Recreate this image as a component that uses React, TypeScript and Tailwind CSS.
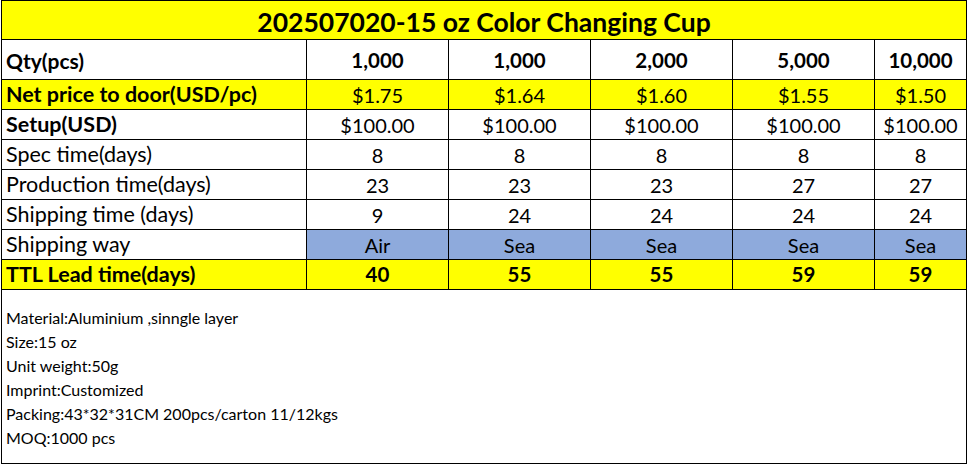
import React from "react";

const cols = ["1,000", "1,000", "2,000", "5,000", "10,000"];

type Row = {
  label: string;
  values: string[];
  bg: string;
  bold: boolean;
  labelBold: boolean;
  cellBg?: string;
};

const rows: Row[] = [
  { label: "Net price to door(USD/pc)", values: ["$1.75", "$1.64", "$1.60", "$1.55", "$1.50"], bg: "bg-[#ffff00]", bold: false, labelBold: true },
  { label: "Setup(USD)", values: ["$100.00", "$100.00", "$100.00", "$100.00", "$100.00"], bg: "bg-white", bold: false, labelBold: true },
  { label: "Spec time(days)", values: ["8", "8", "8", "8", "8"], bg: "bg-white", bold: false, labelBold: false },
  { label: "Production time(days)", values: ["23", "23", "23", "27", "27"], bg: "bg-white", bold: false, labelBold: false },
  { label: "Shipping time (days)", values: ["9", "24", "24", "24", "24"], bg: "bg-white", bold: false, labelBold: false },
  { label: "Shipping way", values: ["Air", "Sea", "Sea", "Sea", "Sea"], bg: "bg-white", bold: false, labelBold: false, cellBg: "bg-[#8eaadc]" },
  { label: "TTL Lead time(days)", values: ["40", "55", "55", "59", "59"], bg: "bg-[#ffff00]", bold: true, labelBold: true },
];

const notes = [
  "Material:Aluminium ,sinngle layer",
  "Size:15 oz",
  "Unit weight:50g",
  "Imprint:Customized",
  "Packing:43*32*31CM 200pcs/carton 11/12kgs",
  "MOQ:1000 pcs",
];

export default function App() {
  return (
    <div className="w-[969px] h-[468px] bg-white text-black" style={{ fontFamily: "Lato, 'Open Sans', sans-serif" }}>
      <div className="ml-[1px] w-[966px] grid grid-cols-[304px_141px_141px_141px_141px_91px] grid-rows-[38px_39px_29px_29px_29px_29px_29px_29px_29px_173px] gap-px bg-black p-px">
        <div className="col-span-6 bg-[#ffff00] flex items-center justify-center pt-[5px] text-[26.5px] font-bold leading-none">
          202507020-15 oz Color Changing Cup
        </div>
        <div className="bg-white flex items-center pl-[4px] text-[21px] font-bold leading-none pt-[2px]">Qty(pcs)</div>
        {cols.map((c, i) => (
          <div key={i} className="bg-white flex items-center justify-center text-[20.5px] font-bold leading-none pt-[2px]">
            {c}
          </div>
        ))}
        {rows.map((r, ri) => (
          <React.Fragment key={ri}>
            <div className={`${r.bg} flex items-center pl-[4px] text-[21.5px] leading-none whitespace-nowrap ${r.labelBold ? "font-bold" : "font-normal"}`}>
              {r.label}
            </div>
            {r.values.map((v, vi) => (
              <div
                key={vi}
                className={`${r.cellBg ?? r.bg} flex items-center justify-center leading-none ${r.bold ? "font-bold text-[20.5px]" : "font-normal text-[20px]"}`}
              >
                {v}
              </div>
            ))}
          </React.Fragment>
        ))}
        <div className="col-span-6 bg-white pl-[4px] pt-[16px] flex flex-col text-[16px] leading-[24px]">
          {notes.map((n, i) => (
            <div key={i}>{n}</div>
          ))}
        </div>
      </div>
    </div>
  );
}
